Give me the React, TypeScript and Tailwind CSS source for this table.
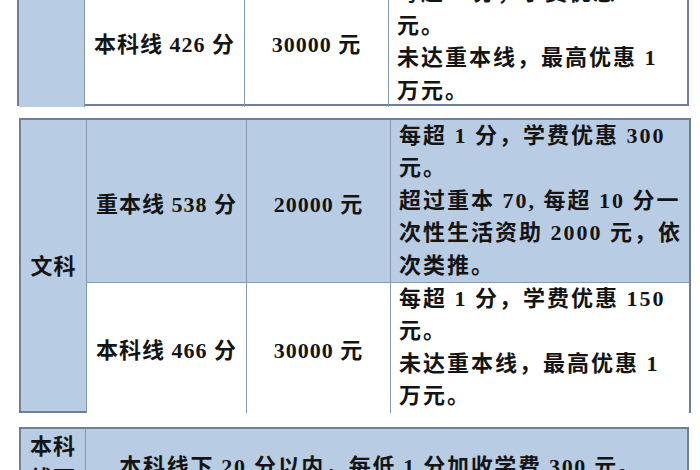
import React from "react";

const F = "[font-family:'Liberation_Serif','Noto_Sans_CJK_SC',serif] font-bold text-[#141414]";
const OUT = "border-2 border-[#6f7f97]";
const IN = "border-[#8797ae]";

function Lines({ lines }: { lines: string[] }) {
  return (
    <div className="flex flex-col">
      {lines.map((l, i) => (
        <div key={i} className="whitespace-nowrap">
          {l}
        </div>
      ))}
    </div>
  );
}

export default function App() {
  return (
    <div className={`w-[700px] h-[470px] overflow-hidden bg-white ${F} text-[22px]`}>
      {/* Block 1 */}
      <div className={`ml-[17px] mt-[-27px] w-[672px] h-[133px] ${OUT} grid grid-cols-[65px_160px_144px_1fr]`}>
        <div className="bg-[#b8cce4]" />
        <div className={`border-l ${IN} flex items-center justify-center tracking-[1px] pt-[6px]`}>
          本科线 426 分
        </div>
        <div className={`border-l ${IN} flex items-center justify-center tracking-[1px] pt-[6px]`}>
          30000 元
        </div>
        <div className={`border-l ${IN} pl-2 pt-[2px] leading-[32.6px] tracking-[2px]`}>
          <Lines lines={["每超 1 分，学费优惠 150", "元。", "未达重本线，最高优惠 1", "万元。"]} />
        </div>
      </div>

      {/* Block 2 */}
      <div className={`ml-[19px] mt-[12px] w-[672px] h-[295px] ${OUT} grid grid-cols-[65px_160px_144px_1fr] grid-rows-[162px_1fr] bg-[#b8cce4]`}>
        <div className="row-span-2 flex items-center justify-center tracking-[1px]">文科</div>
        <div className={`border-l ${IN} flex items-center justify-center tracking-[1px] pt-[6px]`}>
          重本线 538 分
        </div>
        <div className={`border-l ${IN} flex items-center justify-center tracking-[1px] pt-[6px]`}>
          20000 元
        </div>
        <div className={`border-l ${IN} pl-2 leading-[32.4px] tracking-[2px]`}>
          <Lines
            lines={[
              "每超 1 分，学费优惠 300",
              "元。",
              "超过重本 70, 每超 10 分一",
              "次性生活资助 2000 元，依",
              "次类推。",
            ]}
          />
        </div>
        <div className={`border-l border-t ${IN} bg-white flex items-center justify-center tracking-[1px] pt-[6px]`}>
          本科线 466 分
        </div>
        <div className={`border-l border-t ${IN} bg-white flex items-center justify-center tracking-[1px] pt-[6px]`}>
          30000 元
        </div>
        <div className={`border-l border-t ${IN} bg-white pl-2 leading-[32.4px] tracking-[2px]`}>
          <Lines lines={["每超 1 分，学费优惠 150", "元。", "未达重本线，最高优惠 1", "万元。"]} />
        </div>
      </div>

      {/* Block 3 */}
      <div className={`ml-[19px] mt-[14px] w-[670px] ${OUT} grid grid-cols-[64px_1fr] bg-[#b8cce4]`}>
        <div className="flex flex-col items-center leading-[32.4px] tracking-[1px] pt-[2px] pb-2">
          <div>本科</div>
          <div>线下</div>
        </div>
        <div className={`border-l ${IN} flex items-center justify-center tracking-[1.7px] pr-3`}>
          本科线下 20 分以内，每低 1 分加收学费 300 元。
        </div>
      </div>
    </div>
  );
}
